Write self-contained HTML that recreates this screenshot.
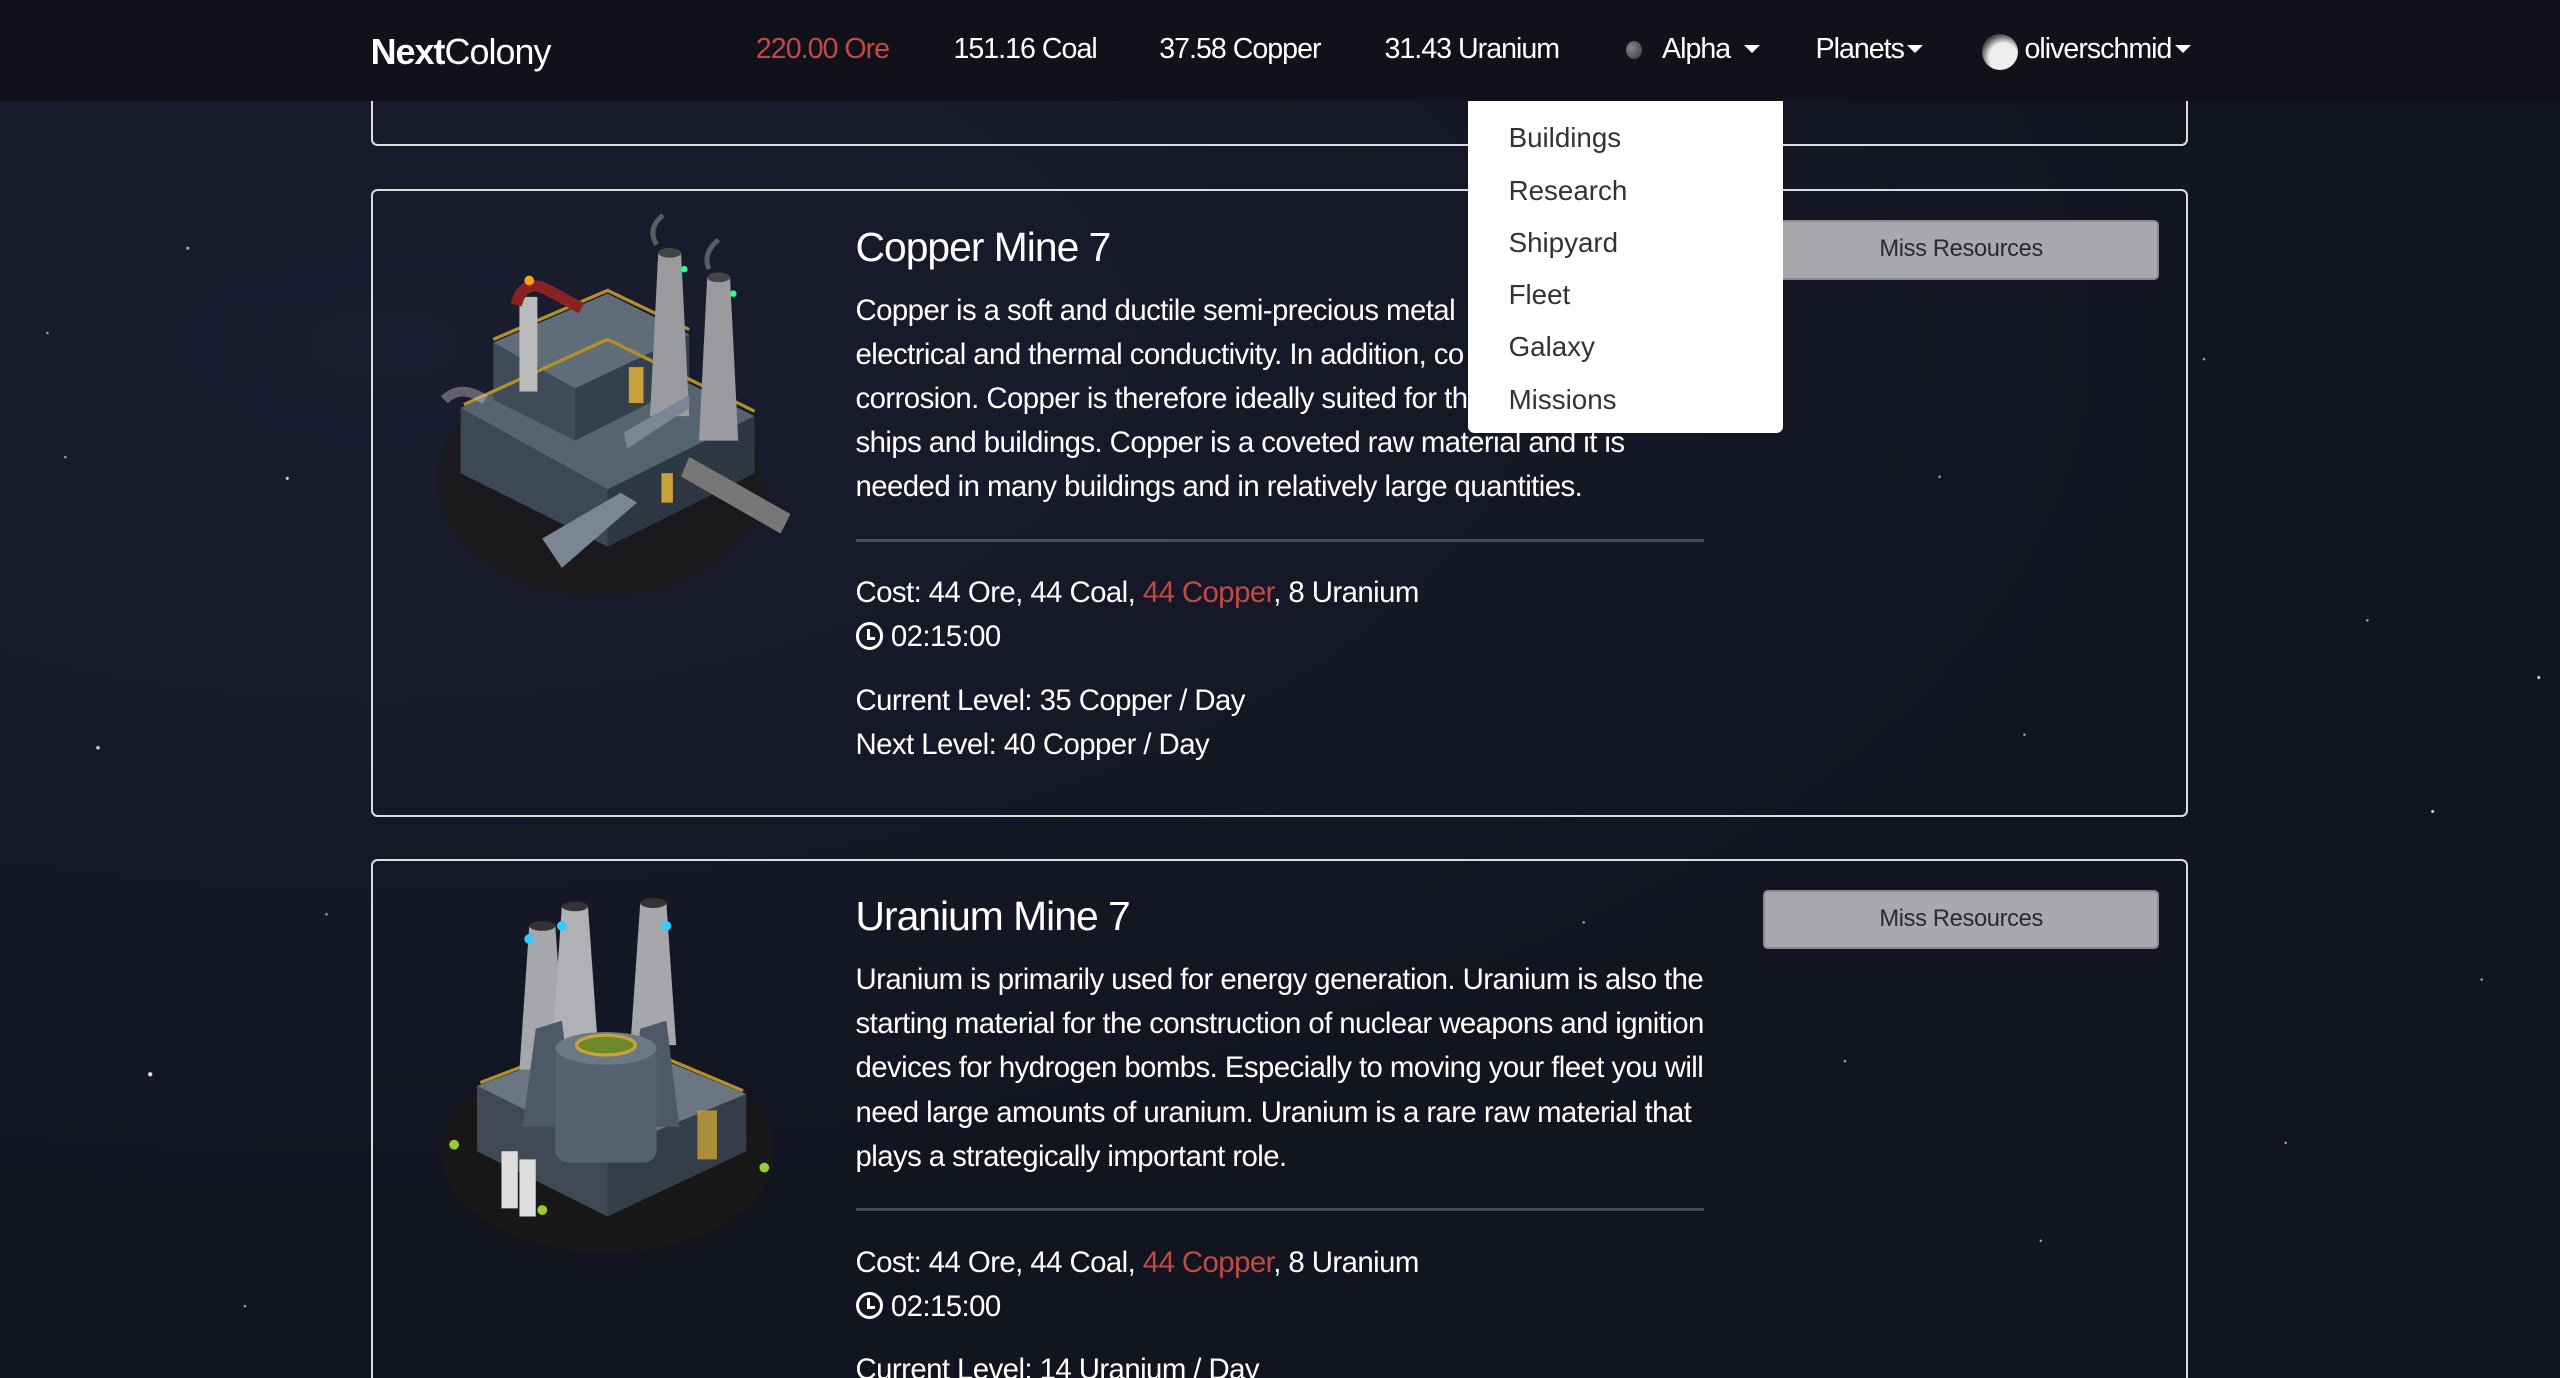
<!DOCTYPE html>
<html><head><meta charset="utf-8">
<style>
html,body{margin:0;padding:0;width:2560px;height:1378px;overflow:hidden;background:#131522;}
#w{zoom:1.63266;width:1568px;height:844px;position:relative;overflow:hidden;font-family:"Liberation Sans",sans-serif;color:#fff;
background:
radial-gradient(1.2px 1.2px at 115px 152px,#aab 60%,transparent),
radial-gradient(1px 1px at 29px 204px,#99a 60%,transparent),
radial-gradient(1.2px 1.2px at 176px 293px,#dcd 60%,transparent),
radial-gradient(1.4px 1.4px at 60px 458px,#ccd 60%,transparent),
radial-gradient(1.6px 1.6px at 92px 658px,#eef 60%,transparent),
radial-gradient(1px 1px at 330px 200px,#99a 60%,transparent),
radial-gradient(1.2px 1.2px at 1490px 497px,#ccd 60%,transparent),
radial-gradient(1.2px 1.2px at 1555px 415px,#ccd 60%,transparent),
radial-gradient(1px 1px at 1188px 292px,#99a 60%,transparent),
radial-gradient(1px 1px at 1240px 450px,#99a 60%,transparent),
radial-gradient(1px 1px at 1350px 220px,#99a 60%,transparent),
radial-gradient(1px 1px at 1450px 380px,#99a 60%,transparent),
radial-gradient(1px 1px at 1520px 600px,#99a 60%,transparent),
radial-gradient(1px 1px at 1400px 700px,#99a 60%,transparent),
radial-gradient(1px 1px at 1250px 760px,#99a 60%,transparent),
radial-gradient(1px 1px at 970px 565px,#99a 60%,transparent),
radial-gradient(1px 1px at 150px 800px,#99a 60%,transparent),
radial-gradient(1px 1px at 40px 280px,#99a 60%,transparent),
radial-gradient(1px 1px at 200px 560px,#99a 60%,transparent),
radial-gradient(1px 1px at 1130px 650px,#99a 60%,transparent),
radial-gradient(ellipse at 15% 25%,#1a1d2f,transparent 60%),
#121420;}
.nav{position:absolute;left:0;top:0;width:1568px;height:62px;background:#10111a;}
.nav span{position:absolute;top:20px;font-size:17.5px;letter-spacing:-0.6px;white-space:nowrap;}
.card{position:absolute;left:227px;width:1111px;border:1.5px solid #ddd;border-radius:4px;}
.t{position:absolute;left:524px;white-space:nowrap;font-size:18px;letter-spacing:-0.35px;}
.h{font-size:25px;letter-spacing:-0.6px;}
.r{color:#c24a46;}
.hr{position:absolute;left:524px;width:520px;height:2px;background:#4a4c55;}
.btn{position:absolute;left:1080px;width:240px;height:34px;background:#a9a9ad;border:1.5px solid #8a8a8e;border-radius:3px;color:#2a2a2e;font-size:14.5px;text-align:center;line-height:34px;letter-spacing:-0.2px;}
.dd{position:absolute;left:899px;top:62px;width:193px;height:203px;background:#fff;border-radius:0 0 4px 4px;}
.dd div{position:absolute;left:25px;color:#333;font-size:17px;}
.clk{display:inline-block;width:13px;height:13px;border:2.2px solid #fff;border-radius:50%;position:relative;vertical-align:-2px;margin-right:5px;}
.clk:after{content:"";position:absolute;left:5px;top:2px;width:3.5px;height:5px;border-left:2px solid #fff;border-bottom:2px solid #fff;}
.caret{display:inline-block;width:0;height:0;border-left:5px solid transparent;border-right:5px solid transparent;border-top:5px solid #fff;vertical-align:3px;margin-left:4px;}
</style></head><body><div id="w">

<div class="card" style="top:40px;height:48px;border-top:none;border-radius:0 0 4px 4px"></div>

<div class="nav">
<span style="left:227px;top:19px;font-size:22px;letter-spacing:-0.6px"><b>Next</b>Colony</span>
<span style="left:463px;color:#c24a46">220.00 Ore</span>
<span style="left:584px">151.16 Coal</span>
<span style="left:710px">37.58 Copper</span>
<span style="left:848px">31.43 Uranium</span>
<span style="left:996px;top:25px;width:10px;height:11px;border-radius:50%;background:radial-gradient(circle at 35% 40%,#888,#333)"></span>
<span style="left:1018px">Alpha <i class="caret"></i></span>
<span style="left:1112px">Planets<i class="caret" style="margin-left:2px"></i></span>
<span style="left:1214px;top:21px;width:22px;height:22px;border-radius:50%;background:radial-gradient(circle at 60% 65%,#eee 45%,#555 70%,#222)"></span>
<span style="left:1240px">oliverschmid<i class="caret" style="margin-left:2px"></i></span>
</div>

<!-- card 2 -->
<div class="card" style="top:116px;height:382px"></div>
<svg style="position:absolute;left:262px;top:130px" width="230" height="240" viewBox="0 0 230 240">
<ellipse cx="105" cy="165" rx="100" ry="70" fill="#1b1a17" opacity=".75"/>
<polygon points="20,120 110,80 200,125 110,170" fill="#56646f"/>
<polygon points="20,120 110,170 110,205 20,160" fill="#3c4856"/>
<polygon points="110,170 200,125 200,160 110,205" fill="#2e3843"/>
<polygon points="40,80 110,50 160,75 90,108" fill="#5f6d79"/>
<polygon points="40,80 90,108 90,140 40,115" fill="#3f4b59"/>
<polygon points="90,108 160,75 160,105 90,140" fill="#34404c"/>
<path d="M22 118 L110 78 L200 122" stroke="#b58e2c" stroke-width="2" fill="none"/>
<path d="M40 78 L110 48 L160 72" stroke="#b58e2c" stroke-width="2" fill="none"/>
<polygon points="141,25 155,25 160,125 136,125" fill="#9a9b9e"/><ellipse cx="148" cy="25" rx="7" ry="3" fill="#444"/>
<polygon points="171,40 185,40 190,140 166,140" fill="#9a9b9e"/><ellipse cx="178" cy="40" rx="7" ry="3" fill="#444"/>
<path d="M140 20 q-6 -10 4 -18 M172 35 q-4 -10 6 -18" stroke="#888" stroke-width="3" fill="none" opacity=".6"/>
<rect x="56" y="52" width="11" height="58" fill="#bbb"/>
<path d="M54 57 q4 -16 18 -10 l22 12" stroke="#8a2222" stroke-width="7" fill="none"/>
<polygon points="70,200 118,172 128,178 82,218" fill="#7a8693"/>
<polygon points="120,135 160,112 160,120 122,145" fill="#7a8693"/>
<polygon points="160,150 222,185 216,197 155,162" fill="#777"/>
<rect x="123" y="95" width="9" height="22" fill="#c9a13a"/>
<rect x="143" y="160" width="7" height="18" fill="#c9a13a"/>
<circle cx="62" cy="42" r="3" fill="#f7a020"/>
<circle cx="157" cy="35" r="2" fill="#3f8"/><circle cx="187" cy="50" r="2" fill="#3f8"/>
<path d="M10 115 q10 -10 25 0" stroke="#ccc" stroke-width="6" fill="none" opacity=".4"/>
</svg>
<div class="t h" style="top:137px">Copper Mine 7</div>
<div class="t" style="top:180px">Copper is a soft and ductile semi-precious metal</div>
<div class="t" style="top:207px">electrical and thermal conductivity. In addition, co</div>
<div class="t" style="top:234px">corrosion. Copper is therefore ideally suited for th</div>
<div class="t" style="top:261px">ships and buildings. Copper is a coveted raw material and it is</div>
<div class="t" style="top:288px">needed in many buildings and in relatively large quantities.</div>
<div class="hr" style="top:330px"></div>
<div class="t" style="top:353px">Cost: 44 Ore, 44 Coal, <span class="r">44 Copper</span>, 8 Uranium</div>
<div class="t" style="top:380px"><i class="clk"></i>02:15:00</div>
<div class="t" style="top:419px">Current Level: 35 Copper / Day</div>
<div class="t" style="top:446px">Next Level: 40 Copper / Day</div>
<div class="btn" style="top:135px">Miss Resources</div>

<!-- card 3 -->
<div class="card" style="top:526px;height:340px"></div>
<svg style="position:absolute;left:262px;top:545px" width="230" height="230" viewBox="0 0 230 230">
<ellipse cx="110" cy="160" rx="102" ry="62" fill="#1b1a17" opacity=".75"/>
<polygon points="30,120 110,90 195,125 110,160" fill="#6a7682"/>
<polygon points="30,120 110,160 110,200 30,160" fill="#3f4a56"/>
<polygon points="110,160 195,125 195,160 110,200" fill="#343e49"/>
<path d="M32 118 L110 88 L193 123" stroke="#b58e2c" stroke-width="2" fill="none"/>
<polygon points="62,22 78,22 84,110 56,110" fill="#a6a7aa"/>
<polygon points="82,10 98,10 104,95 76,95" fill="#b0b1b4"/>
<polygon points="130,8 146,8 152,95 124,95" fill="#a6a7aa"/>
<ellipse cx="70" cy="22" rx="8" ry="3" fill="#333"/><ellipse cx="90" cy="10" rx="8" ry="3" fill="#333"/><ellipse cx="138" cy="8" rx="8" ry="3" fill="#333"/>
<path d="M58 145 L66 85 L82 80 L90 145Z" fill="#4d5966"/>
<path d="M123 145 L130 85 L146 80 L154 145Z" fill="#4d5966"/>
<rect x="78" y="95" width="62" height="72" rx="8" fill="#56626f"/>
<ellipse cx="109" cy="97" rx="31" ry="10" fill="#6c7985"/>
<ellipse cx="109" cy="95" rx="18" ry="6" fill="#6a8a2a" stroke="#c9a13a" stroke-width="2"/>
<rect x="45" y="160" width="10" height="35" fill="#ddd"/><rect x="56" y="165" width="10" height="35" fill="#ddd"/>
<rect x="165" y="135" width="12" height="30" fill="#c9a13a" opacity=".8"/>
<circle cx="62" cy="30" r="3" fill="#3cf"/><circle cx="82" cy="22" r="3" fill="#3cf"/><circle cx="146" cy="22" r="3" fill="#3cf"/>
<circle cx="16" cy="156" r="3" fill="#9c3"/><circle cx="206" cy="170" r="3" fill="#9c3"/><circle cx="70" cy="196" r="3" fill="#9c3"/>
</svg>
<div class="t h" style="top:547px">Uranium Mine 7</div>
<div class="t" style="top:590px">Uranium is primarily used for energy generation. Uranium is also the</div>
<div class="t" style="top:617px">starting material for the construction of nuclear weapons and ignition</div>
<div class="t" style="top:644px">devices for hydrogen bombs. Especially to moving your fleet you will</div>
<div class="t" style="top:671px">need large amounts of uranium. Uranium is a rare raw material that</div>
<div class="t" style="top:698px">plays a strategically important role.</div>
<div class="hr" style="top:740px"></div>
<div class="t" style="top:763px">Cost: 44 Ore, 44 Coal, <span class="r">44 Copper</span>, 8 Uranium</div>
<div class="t" style="top:790px"><i class="clk"></i>02:15:00</div>
<div class="t" style="top:829px">Current Level: 14 Uranium / Day</div>
<div class="btn" style="top:545px">Miss Resources</div>

<div class="dd">
<div style="top:13px">Buildings</div>
<div style="top:45px">Research</div>
<div style="top:77px">Shipyard</div>
<div style="top:109px">Fleet</div>
<div style="top:141px">Galaxy</div>
<div style="top:173px">Missions</div>
</div>
</div></body></html>
